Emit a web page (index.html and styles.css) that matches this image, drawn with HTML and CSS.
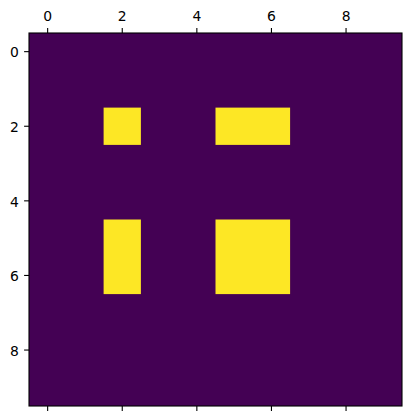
FILE: index.html
```html
<!DOCTYPE html>
<html lang="en">
<head>
    <meta charset="UTF-8">
    <title>matshow</title>
    <link rel="stylesheet" href="styles.css">
</head>
<body>
    <div class="figure">
        <svg class="chart" width="410" height="420" viewBox="0 0 410 420">
            <!-- image cells -->
            <rect class="bg" x="29" y="33" width="373" height="373"/>
            <rect class="on" x="103.6" y="107.6" width="37.3" height="37.3"/>
            <rect class="on" x="215.5" y="107.6" width="74.6" height="37.3"/>
            <rect class="on" x="103.6" y="219.5" width="37.3" height="74.6"/>
            <rect class="on" x="215.5" y="219.5" width="74.6" height="74.6"/>

            <!-- spines -->
            <rect class="spine" x="29" y="33" width="373" height="373"/>

            <!-- top + bottom ticks -->
            <g class="tick">
                <line x1="47.65" y1="33" x2="47.65" y2="28.1"/>
                <line x1="122.25" y1="33" x2="122.25" y2="28.1"/>
                <line x1="196.85" y1="33" x2="196.85" y2="28.1"/>
                <line x1="271.45" y1="33" x2="271.45" y2="28.1"/>
                <line x1="346.05" y1="33" x2="346.05" y2="28.1"/>
                <line x1="47.65" y1="406" x2="47.65" y2="410.9"/>
                <line x1="122.25" y1="406" x2="122.25" y2="410.9"/>
                <line x1="196.85" y1="406" x2="196.85" y2="410.9"/>
                <line x1="271.45" y1="406" x2="271.45" y2="410.9"/>
                <line x1="346.05" y1="406" x2="346.05" y2="410.9"/>
                <line x1="29" y1="51.65" x2="24.1" y2="51.65"/>
                <line x1="29" y1="126.25" x2="24.1" y2="126.25"/>
                <line x1="29" y1="200.85" x2="24.1" y2="200.85"/>
                <line x1="29" y1="275.45" x2="24.1" y2="275.45"/>
                <line x1="29" y1="350.05" x2="24.1" y2="350.05"/>
            </g>

            <g class="xlabels">
                <text x="47.65" y="20.7">0</text>
                <text x="122.25" y="20.7">2</text>
                <text x="196.85" y="20.7">4</text>
                <text x="271.45" y="20.7">6</text>
                <text x="346.05" y="20.7">8</text>
            </g>
            <g class="ylabels">
                <text x="18.9" y="57.4">0</text>
                <text x="18.9" y="132">2</text>
                <text x="18.9" y="206.6">4</text>
                <text x="18.9" y="281.2">6</text>
                <text x="18.9" y="355.8">8</text>
            </g>
        </svg>
    </div>
</body>
</html>
```

FILE: styles.css
```css
body {
    margin: 0;
    background-color: white;
    font-family: 'DejaVu Sans', sans-serif;
}

.figure {
    width: 410px;
    height: 420px;
}

.chart {
    display: block;
}

.bg {
    fill: #440154;
}

.on {
    fill: #fde725;
}

.spine {
    fill: none;
    stroke: black;
    stroke-width: 1.1;
}

.tick line {
    stroke: black;
    stroke-width: 1.1;
}

.xlabels text,
.ylabels text {
    font-family: 'DejaVu Sans', sans-serif;
    font-size: 13.9px;
    fill: black;
}

.xlabels text {
    text-anchor: middle;
}

.ylabels text {
    text-anchor: end;
}
```
